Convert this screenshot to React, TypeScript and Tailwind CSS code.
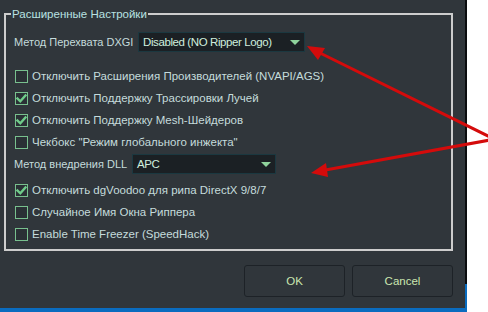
import React from "react";

const FONT = "font-['Liberation_Sans','DejaVu_Sans',sans-serif]";

function CheckBox({ checked }: { checked: boolean }) {
  return (
    <span className="flex h-[13px] w-[13px] shrink-0 items-center justify-center border border-[#78c08e] bg-[#2a3035]">
      {checked && (
        <svg width="11" height="11" viewBox="0 0 11 11" aria-hidden="true">
          <path d="M1.5 5.5 L4.3 8.3 L9.5 2.5" fill="none" stroke="#6fcb8a" strokeWidth="2.4" strokeLinecap="square" />
        </svg>
      )}
    </span>
  );
}

function CheckRow({ label, checked = false, className = "" }: { label: string; checked?: boolean; className?: string }) {
  return (
    <div className={`flex h-[22px] items-center gap-[4px] pl-[1px] ${className}`}>
      <CheckBox checked={checked} />
      <span className="whitespace-nowrap text-[#c5dcdc]">{label}</span>
    </div>
  );
}

function Select({ value, width }: { value: string; width: string }) {
  return (
    <div className={`flex h-[20px] ${width} items-center justify-between border border-[#1b3840] bg-[#1b2024] pl-[4px] pr-[4px]`}>
      <span className="whitespace-nowrap tracking-[-0.4px] text-[#cfeede]">{value}</span>
      <svg width="10" height="5" viewBox="0 0 10 5" aria-hidden="true">
        <polygon points="0,0 10,0 5,5" fill="#8fd39c" />
      </svg>
    </div>
  );
}

function SelectRow({ label, value, labelWidth, width, className = "" }: { label: string; value: string; labelWidth: string; width: string; className?: string }) {
  return (
    <div className={`flex h-[22px] items-center gap-[6px] ${className}`}>
      <span className={`${labelWidth} whitespace-nowrap text-[11px] text-[#c5dcdc]`}>{label}</span>
      <Select value={value} width={width} />
    </div>
  );
}

export default function App() {
  return (
    <div className={`relative h-[312px] w-[488px] overflow-hidden bg-white text-[11.5px] leading-[14px] ${FONT}`}>
      <div className="flex w-[467px] flex-col bg-[#0a6cbf]">
        <div className="flex">
          <div className="flex h-[308px] w-[465px] flex-col bg-[#30363b]">
            <fieldset className="ml-[4px] mt-[7px] h-[244px] w-[449px] border-2 border-[#cdcdcd] pb-[4px]">
              <legend className="ml-[5px] px-[1px] text-[#b8e2e2]">Расширенные Настройки</legend>
              <div className="pl-[8px]">
                <SelectRow className="mt-[10px]" label="Метод Перехвата DXGI" value="Disabled (NO Ripper Logo)" labelWidth="w-[118px]" width="w-[167px]" />
                <CheckRow className="mt-[12px]" label="Отключить Расширения Производителей (NVAPI/AGS)" />
                <CheckRow label="Отключить Поддержку Трассировки Лучей" checked />
                <CheckRow label="Отключить Поддержку Mesh-Шейдеров" checked />
                <CheckRow label={'Чекбокс "Режим глобального инжекта"'} />
                <SelectRow label="Метод внедрения DLL" value="APC" labelWidth="w-[112px]" width="w-[144px]" />
                <CheckRow className="mt-[4px]" label="Отключить dgVoodoo для рипа DirectX 9/8/7" checked />
                <CheckRow label="Случайное Имя Окна Риппера" />
                <CheckRow label="Enable Time Freezer (SpeedHack)" />
              </div>
            </fieldset>
            <div className="mr-[12px] mt-[14px] flex justify-end gap-[7px]">
              <button className="h-[32px] w-[101px] rounded-[3px] border border-[#1d2227] bg-[#30363b] text-[#cbe6b0]">OK</button>
              <button className="h-[32px] w-[101px] rounded-[3px] border border-[#1d2227] bg-[#30363b] text-[#cbe6b0]">Cancel</button>
            </div>
          </div>
          <div className="h-[284px] w-[2px] bg-[#0b0d0f]" />
        </div>
        <div className="h-[4px]" />
      </div>

      <svg className="pointer-events-none absolute left-0 top-0" width="488" height="312" aria-hidden="true">
        <line x1="316" y1="51" x2="492" y2="138" stroke="#d40b0b" strokeWidth="3" />
        <polygon points="307,46 325,48 318,60" fill="#d40b0b" />
        <line x1="320" y1="171" x2="490" y2="140" stroke="#d40b0b" strokeWidth="3" />
        <polygon points="311,173 326,163 328,177" fill="#d40b0b" />
      </svg>
    </div>
  );
}
